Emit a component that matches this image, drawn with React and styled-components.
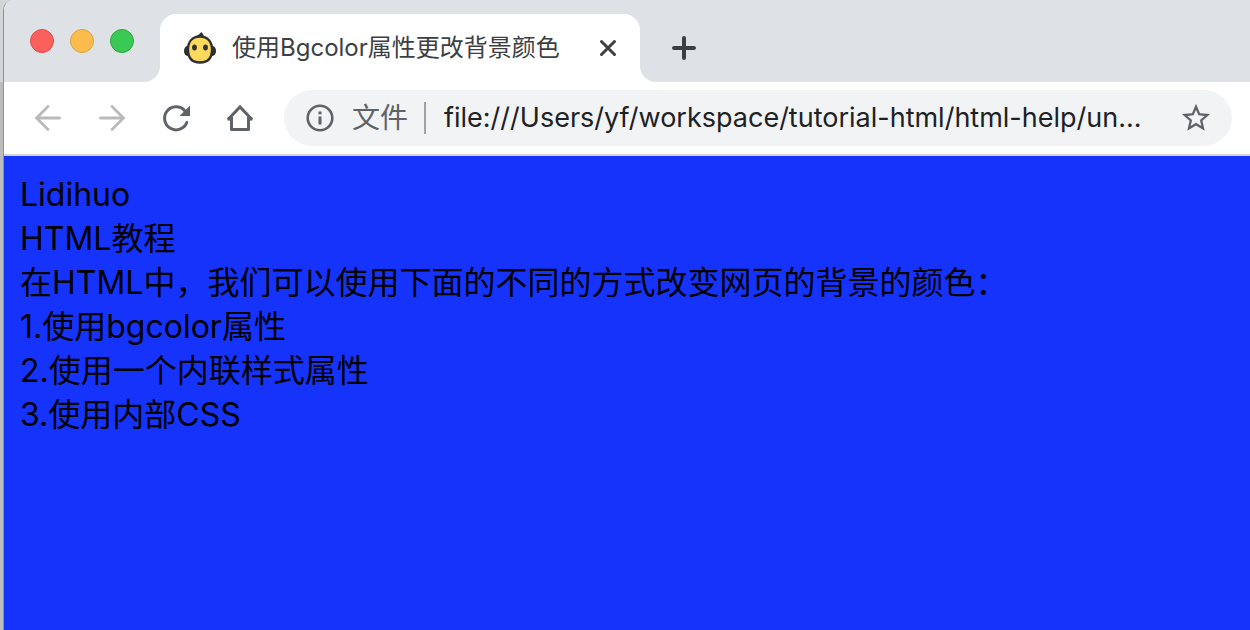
import styled, { createGlobalStyle } from "styled-components";

const GlobalStyle = createGlobalStyle`
  * {
    box-sizing: border-box;
  }
  body {
    margin: 0;
    font-family: Inter, "Noto Sans CJK SC", sans-serif;
  }
`;

const Desktop = styled.div`
  min-height: 100vh;
  padding-left: 3px;
  display: flex;
  background: linear-gradient(#d3d5d8 82px, #bcbcbc 82px);
`;
const Browser = styled.div`
  flex: 1;
  min-width: 0;
  display: flex;
  flex-direction: column;
  overflow: hidden;
  border-left: 1px solid #8f9193;
  border-top-left-radius: 10px;
  background: #ffffff;
`;
const TabStrip = styled.header`
  display: flex;
  height: 82px;
`;
const WindowButtons = styled.div`
  width: 156px;
  padding: 29px 0 0 26px;
  display: flex;
  gap: 16px;
  background: #dee1e6;
  border-bottom-right-radius: 16px;
`;
const WindowButton = styled.button`
  width: 24px;
  height: 24px;
  padding: 0;
  border: 1px solid ${(props) => props.$edge};
  border-radius: 50%;
  background: ${(props) => props.$color};
`;
const TabSlot = styled.div`
  width: 480px;
  padding-top: 14px;
  background: linear-gradient(#dee1e6 50%, #ffffff 50%);
`;
const Tab = styled.div`
  height: 68px;
  padding: 0 20px 0 24px;
  display: flex;
  align-items: center;
  background: #ffffff;
  border-radius: 16px 16px 0 0;
`;
const TabTitle = styled.h1`
  flex: 1;
  margin: 0 0 0 16px;
  font-size: 24px;
  font-weight: 400;
  line-height: 36px;
  white-space: nowrap;
  color: #3c4043;
`;
const StripRest = styled.div`
  flex: 1;
  padding: 14px 0 0 32px;
  display: flex;
  align-items: center;
  background: #dee1e6;
  border-bottom-left-radius: 16px;
`;
const IconButton = styled.button`
  width: ${(props) => props.$size}px;
  height: ${(props) => props.$size}px;
  padding: 0;
  display: flex;
  align-items: center;
  justify-content: center;
  flex-shrink: 0;
  border: none;
  background: none;
  color: ${(props) => props.$color || "#5f6368"};
`;
const Toolbar = styled.nav`
  height: 74px;
  padding: 0 18px 0 24px;
  display: flex;
  align-items: center;
  gap: 24px;
  border-bottom: 2px solid #d3d5da;
`;
const AddressBar = styled.div`
  flex: 1;
  min-width: 0;
  height: 56px;
  padding: 0 16px;
  display: flex;
  align-items: center;
  border-radius: 28px;
  background: #f1f3f4;
`;
const Scheme = styled.label`
  margin-left: 12px;
  padding-right: 16px;
  border-right: 2px solid #9fa2a6;
  font-size: 28px;
  line-height: 32px;
  white-space: nowrap;
  color: #5f6368;
`;
const Address = styled.input`
  flex: 1;
  min-width: 0;
  margin: 0 16px 0 18px;
  padding: 0;
  border: none;
  outline: none;
  background: none;
  font-family: inherit;
  font-size: 27px;
  line-height: 40px;
  color: #202124;
`;
const Page = styled.main`
  flex: 1;
  padding: 17px 16px;
  background: #1533fb;
  color: #000000;
  font-size: 32px;
  line-height: 44px;
`;

function Favicon() {
  return (
    <svg width="32" height="32" viewBox="0 0 32 32" aria-hidden="true">
      <path d="M11 4.500Q15 3 17.500 0Q20 2.500 19.500 5Z" fill="#2d2f30" />
      <ellipse cx="3.500" cy="19" rx="3.500" ry="5" fill="#2d2f30" />
      <ellipse cx="28.500" cy="19" rx="3.500" ry="5" fill="#2d2f30" />
      <path
        d="M16 4.500C8.500 4.500 4 9.500 4 17.500C4 26 8 30.500 16 30.500S28 26 28 17.500C28 9.500 23.500 4.500 16 4.500Z"
        fill="#ffd95c"
        stroke="#2d2f30"
        strokeWidth="2.400"
      />
      <ellipse cx="10.500" cy="15.500" rx="2.400" ry="3" fill="#2d2f30" />
      <ellipse cx="21.500" cy="15.500" rx="2.400" ry="3" fill="#2d2f30" />
    </svg>
  );
}

export default function App() {
  return (
    <>
      <GlobalStyle />
      <Desktop>
        <Browser>
          <TabStrip>
            <WindowButtons>
              <WindowButton $color="#fc605c" $edge="#de4c49" aria-label="关闭窗口" />
              <WindowButton $color="#fdbc4e" $edge="#dda03b" aria-label="最小化" />
              <WindowButton $color="#3ac955" $edge="#2ba73c" aria-label="全屏" />
            </WindowButtons>
            <TabSlot>
              <Tab>
                <Favicon />
                <TabTitle>使用Bgcolor属性更改背景颜色</TabTitle>
                <IconButton $size={24} $color="#3c4043" aria-label="关闭标签页">
                  <svg width="24" height="24" fill="none" stroke="currentColor" strokeWidth="3" strokeLinecap="round">
                    <path d="M5.500 5.500L18.500 18.500M18.500 5.500L5.500 18.500" />
                  </svg>
                </IconButton>
              </Tab>
            </TabSlot>
            <StripRest>
              <IconButton $size={24} $color="#3c4043" aria-label="新标签页">
                <svg width="24" height="24" fill="none" stroke="currentColor" strokeWidth="4" strokeLinecap="round">
                  <path d="M12 2V22M2 12H22" />
                </svg>
              </IconButton>
            </StripRest>
          </TabStrip>
          <Toolbar>
            <IconButton $size={40} $color="#bababa" aria-label="后退">
              <svg width="32" height="32" fill="none" stroke="currentColor" strokeWidth="2.800" strokeLinecap="round">
                <path d="M27.500 16H5M16 4.500L4.500 16L16 27.500" />
              </svg>
            </IconButton>
            <IconButton $size={40} $color="#bababa" aria-label="前进">
              <svg width="32" height="32" fill="none" stroke="currentColor" strokeWidth="2.800" strokeLinecap="round">
                <path d="M4.500 16H27M16 4.500L27.500 16L16 27.500" />
              </svg>
            </IconButton>
            <IconButton $size={40} aria-label="重新加载">
              <svg width="32" height="32" fill="none" stroke="currentColor" strokeWidth="3">
                <path d="M26.800 20.500A11.500 11.500 0 1 1 24.500 8.500" strokeLinecap="round" />
                <path d="M30 3.500V14H19.500Z" fill="currentColor" stroke="none" />
              </svg>
            </IconButton>
            <IconButton $size={40} aria-label="主页">
              <svg width="32" height="32" fill="none" stroke="currentColor" strokeWidth="3" strokeLinejoin="round">
                <path d="M4 17.500L16 5L28 17.500" strokeLinejoin="miter" />
                <path d="M7.500 15V27.500H24.500V15M3.500 17H8M24 17H28.500" />
              </svg>
            </IconButton>
            <AddressBar>
              <IconButton $size={40} aria-label="网站信息">
                <svg width="28" height="28" fill="none" stroke="currentColor" strokeWidth="2.600">
                  <circle cx="14" cy="14" r="12.300" />
                  <path d="M14 12.500V20.500M14 7.500V10.300" strokeWidth="3" />
                </svg>
              </IconButton>
              <Scheme htmlFor="address">文件</Scheme>
              <Address
                id="address"
                type="text"
                defaultValue="file:///Users/yf/workspace/tutorial-html/html-help/un..."
              />
              <IconButton $size={40} aria-label="收藏">
                <svg width="34" height="34" viewBox="0 0 24 24" fill="currentColor">
                  <path d="M22 9.240l-7.190-.620L12 2 9.190 8.630 2 9.240l5.460 4.730L5.820 21 12 17.270 18.180 21l-1.630-7.030L22 9.240zM12 15.400l-3.760 2.270 1-4.280-3.320-2.880 4.380-.380L12 6.100l1.710 4.040 4.380.380-3.320 2.880 1 4.280L12 15.400z" />
                </svg>
              </IconButton>
            </AddressBar>
          </Toolbar>
          <Page>
            Lidihuo
            <br />
            HTML教程
            <br />
            在HTML中，我们可以使用下面的不同的方式改变网页的背景的颜色：
            <br />
            1.使用bgcolor属性
            <br />
            2.使用一个内联样式属性
            <br />
            3.使用内部CSS
          </Page>
        </Browser>
      </Desktop>
    </>
  );
}
